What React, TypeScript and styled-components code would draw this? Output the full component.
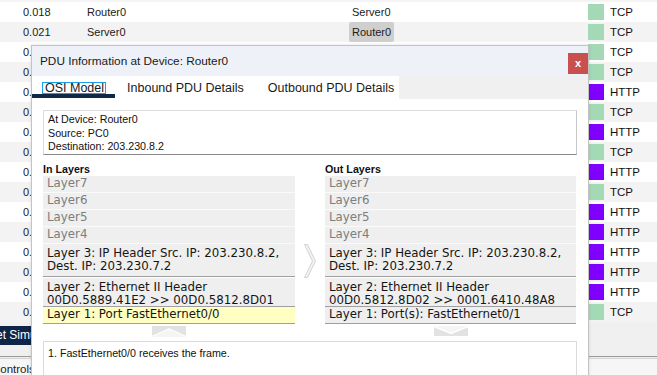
import React from "react";
import styled, { createGlobalStyle } from "styled-components";

const GlobalStyle = createGlobalStyle`
  html, body {
    margin: 0;
    padding: 0;
    background: #ffffff;
    overflow: hidden;
  }
  * {
    box-sizing: border-box;
  }
`;

const ARIAL = `"Liberation Sans", Arial, sans-serif`;
const VERDANA = `"DejaVu Sans", Verdana, sans-serif`;

const Page = styled.div`
  position: relative;
  width: 657px;
  height: 375px;
  overflow: hidden;
  display: flex;
  flex-direction: column;
  background: #f4f4f4;
  padding-top: 2px;
`;

const EventTable = styled.div`
  display: flex;
  flex-direction: column;
`;

const EventRow = styled.div<{ $alt: boolean }>`
  display: grid;
  grid-template-columns: 23px 64px 262px 239px 16px 1fr;
  align-items: center;
  height: 20px;
  background: ${(p) => (p.$alt ? "#f3f3f3" : "#ffffff")};
  font-family: ${ARIAL};
  font-size: 11px;
  color: #1b1b1b;
`;

const Cell = styled.div`
  white-space: nowrap;
  overflow: hidden;
`;

const DestCell = styled.div<{ $selected: boolean }>`
  justify-self: start;
  height: 20px;
  line-height: 20px;
  padding: 0 3px;
  border-radius: 2px;
  background: ${(p) => (p.$selected ? "#cfcfcf" : "transparent")};
`;

const ColorSwatch = styled.div<{ $color: string }>`
  width: 16px;
  height: 16px;
  background: ${(p) => p.$color};
`;

const Proto = styled.div`
  padding-left: 6px;
  font-family: ${ARIAL};
  font-size: 11.5px;
  color: #111;
`;

const Toolbar = styled.div`
  height: 34px;
  background: #f0f0f0;
  display: flex;
  align-items: flex-start;
  padding-top: 4px;
`;

const NavyButton = styled.div`
  height: 19px;
  width: 90px;
  margin-left: -4px;
  background: #0f2548;
  color: #fff;
  font-family: ${ARIAL};
  font-size: 12px;
  line-height: 19px;
  white-space: nowrap;
`;

const Divider = styled.div`
  height: 3px;
  border-top: 1px solid #9c9c9c;
  border-bottom: 1px solid #d6d6d6;
  background: #ececec;
`;

const ControlsPanel = styled.div`
  flex: 1;
  background: #f6f6f6;
  font-family: ${ARIAL};
  font-size: 11.5px;
  color: #222;
  padding-top: 4px;
  margin-left: -8px;
`;

/* dialog */

const Dialog = styled.div`
  position: absolute;
  left: 31px;
  top: 45px;
  width: 558px;
  height: 345px;
  background: #ffffff;
  border: 1px solid #c3c3c3;
  box-shadow: 0 0 3px rgba(0, 0, 0, 0.12);
  display: flex;
  flex-direction: column;
`;

const TitleBar = styled.div`
  height: 30px;
  background: #eef2f8;
  display: flex;
  align-items: flex-start;
  justify-content: space-between;
  padding-left: 8px;
`;

const Title = styled.div`
  font-family: ${ARIAL};
  font-size: 11.8px;
  color: #1a1a1a;
  line-height: 31px;
`;

const CloseButton = styled.div`
  margin-top: 7px;
  width: 20px;
  height: 21px;
  background: #c8504f;
  color: #fff;
  font-family: ${ARIAL};
  font-weight: bold;
  font-size: 11px;
  display: flex;
  align-items: center;
  justify-content: center;
  padding-bottom: 2px;
`;

const TabBar = styled.div`
  height: 23px;
  display: flex;
  background: #ffffff;
`;

const Tab = styled.div<{ $active?: boolean; $last?: boolean }>`
  position: relative;
  padding-top: 5px;
  padding-left: ${(p) => (p.$active ? "10px" : "12px")};
  padding-right: ${(p) => (p.$active ? "9px" : p.$last ? "5px" : "12px")};
  font-family: ${ARIAL};
  font-size: 12.5px;
  color: #1a1a1a;
  white-space: nowrap;
  &::after {
    content: "";
    display: ${(p) => (p.$active ? "block" : "none")};
    position: absolute;
    left: 0;
    right: 0;
    bottom: 1px;
    height: 4px;
    background: #0f2a49;
  }
`;

const FocusLabel = styled.span`
  display: inline-block;
  border: 1px solid #1aa2e6;
  padding: 0 1px 0 2px;
  line-height: 10px;
  height: 12px;
`;

const TabFiller = styled.div`
  flex: 1;
  background: #f0f0f0;
`;

const Body = styled.div`
  flex: 1;
  padding: 11px 11px 0 11px;
  display: flex;
  flex-direction: column;
`;

const InfoBox = styled.div`
  height: 45px;
  border: 1px solid #dcdcdc;
  border-right-color: #c8c8c8;
  border-bottom-color: #8a8a8a;
  padding: 2px 4px;
  font-family: ${ARIAL};
  font-size: 10.7px;
  line-height: 13.5px;
  color: #111;
`;

const LayersGrid = styled.div`
  display: grid;
  grid-template-columns: 252px 30px 251px;
  margin-top: 4px;
`;

const ColumnHeader = styled.div`
  font-family: ${ARIAL};
  font-weight: bold;
  font-size: 10.7px;
  color: #111;
  height: 17px;
  line-height: 20px;
`;

const LayerCell = styled.div<{ $kind: "off" | "on" | "current"; $h: number; $sep: boolean }>`
  height: ${(p) => p.$h}px;
  background: ${(p) => (p.$kind === "current" ? "#ffffc4" : "#efefef")};
  color: ${(p) => (p.$kind === "off" ? "#7d7d7d" : "#151515")};
  border-bottom: 1px solid ${(p) => (p.$sep ? "#9f9f9f" : "#fafafa")};
  font-family: ${VERDANA};
  font-size: 11.8px;
  line-height: 13px;
  padding: ${(p) => (p.$h > 20 ? "3px" : "1px")} 4px 0 4px;
  white-space: nowrap;
  overflow: hidden;
`;

const MidCell = styled.div`
  display: flex;
  align-items: center;
  justify-content: center;
`;

const ChevronRow = styled.div`
  display: grid;
  grid-template-columns: 252px 30px 251px;
  height: 17px;
  padding-top: 2px;
`;

const ChevronCell = styled.div`
  display: flex;
  justify-content: center;
`;

const DescBox = styled.div`
  flex: 1;
  border: 1px solid #dadada;
  padding: 5px 4px;
  font-family: ${ARIAL};
  font-size: 10.7px;
  color: #111;
`;

const RightArrow = () => (
  <svg width="12" height="34" viewBox="0 0 12 34">
    <polygon points="0.5,0.5 3.5,0.5 11.5,17 3.5,33.5 0.5,33.5 8.5,17" fill="#f3f3f3" stroke="#d2d2d2" strokeWidth="1" />
  </svg>
);

const UpChevron = () => (
  <svg width="34" height="11" viewBox="0 0 34 11">
    <rect x="0" y="0" width="34" height="11" fill="#e2e2e2" />
    <polyline points="0,10.5 17,3 34,10.5" fill="none" stroke="#ffffff" strokeWidth="1.5" />
    <polygon points="0,11 17,4 34,11" fill="#f5f5f5" />
  </svg>
);

const DownChevron = () => (
  <svg width="34" height="10" viewBox="0 0 34 10">
    <rect x="0" y="0" width="34" height="10" fill="#e2e2e2" />
    <polygon points="0,0 17,7 34,0" fill="#f5f5f5" />
    <polyline points="0,0.5 17,7.5 34,0.5" fill="none" stroke="#ffffff" strokeWidth="1.5" />
  </svg>
);

const TCP = "#a3d9b5";
const HTTP = "#8000ff";

const events = [
  { t: "0.018", src: "Router0", dst: "Server0", p: "TCP" },
  { t: "0.021", src: "Server0", dst: "Router0", p: "TCP", sel: true },
  { t: "0.022", src: "Router0", dst: "PC0", p: "TCP" },
  { t: "0.023", src: "PC0", dst: "Router0", p: "TCP" },
  { t: "0.023", src: "PC0", dst: "Router0", p: "HTTP" },
  { t: "0.024", src: "Router0", dst: "Server0", p: "TCP" },
  { t: "0.024", src: "Router0", dst: "Server0", p: "HTTP" },
  { t: "0.025", src: "Server0", dst: "Router0", p: "TCP" },
  { t: "0.025", src: "Server0", dst: "Router0", p: "HTTP" },
  { t: "0.026", src: "Router0", dst: "PC0", p: "TCP" },
  { t: "0.026", src: "Router0", dst: "PC0", p: "HTTP" },
  { t: "0.027", src: "PC0", dst: "Router0", p: "HTTP" },
  { t: "0.028", src: "Router0", dst: "Server0", p: "HTTP" },
  { t: "0.029", src: "Server0", dst: "Router0", p: "HTTP" },
  { t: "0.030", src: "Router0", dst: "PC0", p: "HTTP" },
  { t: "0.031", src: "PC0", dst: "Router0", p: "TCP" },
];

type Layer = { text: React.ReactNode; kind: "off" | "on" | "current"; h: number; sep: boolean };

const inLayers: Layer[] = [
  { text: "Layer7", kind: "off", h: 17, sep: false },
  { text: "Layer6", kind: "off", h: 17, sep: false },
  { text: "Layer5", kind: "off", h: 17, sep: false },
  { text: "Layer4", kind: "off", h: 17, sep: false },
  {
    text: (
      <>
        Layer 3: IP Header Src. IP: 203.230.8.2,
        <br />
        Dest. IP: 203.230.7.2
      </>
    ),
    kind: "on",
    h: 33,
    sep: true,
  },
  {
    text: (
      <>
        Layer 2: Ethernet II Header
        <br />
        00D0.5889.41E2 &gt;&gt; 00D0.5812.8D01
      </>
    ),
    kind: "on",
    h: 29,
    sep: true,
  },
  { text: "Layer 1: Port FastEthernet0/0", kind: "current", h: 17, sep: true },
];

const outLayers: Layer[] = [
  { text: "Layer7", kind: "off", h: 17, sep: false },
  { text: "Layer6", kind: "off", h: 17, sep: false },
  { text: "Layer5", kind: "off", h: 17, sep: false },
  { text: "Layer4", kind: "off", h: 17, sep: false },
  {
    text: (
      <>
        Layer 3: IP Header Src. IP: 203.230.8.2,
        <br />
        Dest. IP: 203.230.7.2
      </>
    ),
    kind: "on",
    h: 33,
    sep: true,
  },
  {
    text: (
      <>
        Layer 2: Ethernet II Header
        <br />
        00D0.5812.8D02 &gt;&gt; 0001.6410.48A8
      </>
    ),
    kind: "on",
    h: 29,
    sep: true,
  },
  { text: "Layer 1: Port(s): FastEthernet0/1", kind: "on", h: 17, sep: true },
];

export default function App() {
  return (
    <>
      <GlobalStyle />
      <Page>
        <EventTable>
          {events.map((e, i) => (
            <EventRow key={i} $alt={i % 2 === 1}>
              <span />
              <Cell>{e.t}</Cell>
              <Cell>{e.src}</Cell>
              <Cell>
                <DestCell $selected={!!e.sel}>{e.dst}</DestCell>
              </Cell>
              <ColorSwatch $color={e.p === "TCP" ? TCP : HTTP} />
              <Proto>{e.p}</Proto>
            </EventRow>
          ))}
        </EventTable>
        <Toolbar>
          <NavyButton>et Simulation</NavyButton>
        </Toolbar>
        <Divider />
        <ControlsPanel>Controls</ControlsPanel>

        <Dialog>
          <TitleBar>
            <Title>PDU Information at Device: Router0</Title>
            <CloseButton>x</CloseButton>
          </TitleBar>
          <TabBar>
            <Tab $active>
              <FocusLabel>OSI Model</FocusLabel>
            </Tab>
            <Tab>Inbound PDU Details</Tab>
            <Tab $last>Outbound PDU Details</Tab>
            <TabFiller />
          </TabBar>
          <Body>
            <InfoBox>
              At Device: Router0
              <br />
              Source: PC0
              <br />
              Destination: 203.230.8.2
            </InfoBox>
            <LayersGrid>
              <ColumnHeader>In Layers</ColumnHeader>
              <span />
              <ColumnHeader>Out Layers</ColumnHeader>
              {inLayers.map((l, i) => (
                <React.Fragment key={i}>
                  <LayerCell $kind={l.kind} $h={l.h} $sep={l.sep}>
                    {l.text}
                  </LayerCell>
                  <MidCell>{i === 4 ? <RightArrow /> : null}</MidCell>
                  <LayerCell $kind={outLayers[i].kind} $h={outLayers[i].h} $sep={outLayers[i].sep}>
                    {outLayers[i].text}
                  </LayerCell>
                </React.Fragment>
              ))}
            </LayersGrid>
            <ChevronRow>
              <ChevronCell>
                <UpChevron />
              </ChevronCell>
              <span />
              <ChevronCell>
                <DownChevron />
              </ChevronCell>
            </ChevronRow>
            <DescBox>1. FastEthernet0/0 receives the frame.</DescBox>
          </Body>
        </Dialog>
      </Page>
    </>
  );
}
